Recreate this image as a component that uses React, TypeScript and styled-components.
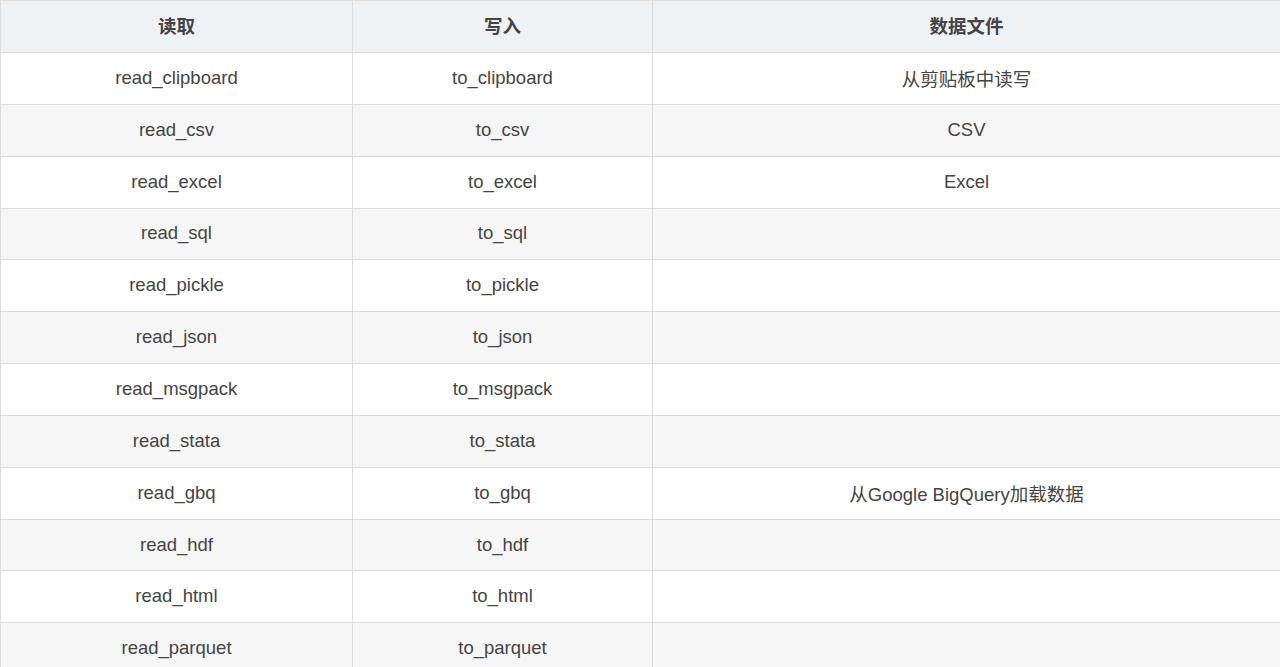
import styled, { createGlobalStyle } from "styled-components";

const GlobalStyle = createGlobalStyle`
  html, body {
    margin: 0;
    padding: 0;
    background: #fff;
  }
`;

const rows: [string, string, string][] = [
  ["read_clipboard", "to_clipboard", "从剪贴板中读写"],
  ["read_csv", "to_csv", "CSV"],
  ["read_excel", "to_excel", "Excel"],
  ["read_sql", "to_sql", ""],
  ["read_pickle", "to_pickle", ""],
  ["read_json", "to_json", ""],
  ["read_msgpack", "to_msgpack", ""],
  ["read_stata", "to_stata", ""],
  ["read_gbq", "to_gbq", "从Google BigQuery加载数据"],
  ["read_hdf", "to_hdf", ""],
  ["read_html", "to_html", ""],
  ["read_parquet", "to_parquet", ""],
];

const Table = styled.table`
  width: 1277px;
  border-collapse: collapse;
  table-layout: fixed;
  font-family: "Liberation Sans", Arial, "Noto Sans CJK SC", sans-serif;
  font-size: 18.5px;
  color: #444;
`;

const HeadCell = styled.th<{ w: number }>`
  width: ${(p) => p.w}px;
  height: 48px;
  padding: 0 0 3px;
  background: #eef2f5;
  border: 1px solid #dcdcdc;
  font-weight: bold;
  font-size: 18.5px;
  color: #444;
  text-align: center;
`;

const Row = styled.tr<{ striped: boolean }>`
  background: ${(p) => (p.striped ? "#f6f6f6" : "#fff")};
`;

const Cell = styled.td`
  height: 49.85px;
  padding: 0 0 1px;
  border: 1px solid #dcdcdc;
  text-align: center;
`;

export default function App() {
  return (
    <>
      <GlobalStyle />
      <Table>
        <thead>
          <tr>
            <HeadCell w={351}>读取</HeadCell>
            <HeadCell w={299}>写入</HeadCell>
            <HeadCell w={627}>数据文件</HeadCell>
          </tr>
        </thead>
        <tbody>
          {rows.map((r, i) => (
            <Row key={r[0]} striped={i % 2 === 1}>
              <Cell>{r[0]}</Cell>
              <Cell>{r[1]}</Cell>
              <Cell>{r[2]}</Cell>
            </Row>
          ))}
        </tbody>
      </Table>
    </>
  );
}
